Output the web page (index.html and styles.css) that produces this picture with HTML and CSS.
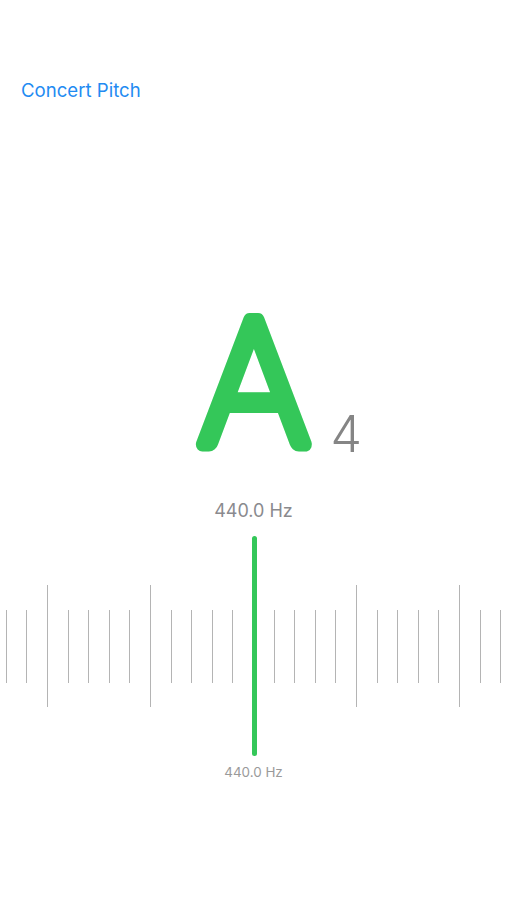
FILE: index.html
```html
<!DOCTYPE html>
<html lang="en">
<head>
    <meta charset="UTF-8">
    <meta name="viewport" content="width=device-width, initial-scale=1.0">
    <title>Tuner</title>
    <link rel="stylesheet" href="styles.css">
</head>
<body>
    <header class="top-bar">
        <a class="pitch-link" href="#">Concert Pitch</a>
    </header>
    <main class="tuner">
        <div class="note">
            <svg class="note-name" width="130" height="150" viewBox="0 0 130 150">
                <text transform="translate(65 0) scale(0.93 1)" x="0" y="143" text-anchor="middle">A</text>
            </svg>
            <span class="note-octave">4</span>
        </div>
        <p class="frequency">440.0 Hz</p>

        <div class="meter">
            <div class="scale" id="scale"></div>
            <div class="needle"></div>
        </div>
        <p class="frequency small">440.0 Hz</p>
    </main>

    <script>
        // 25 ticks, every fifth one is long
        const scale = document.getElementById('scale');
        for (let i = -12; i <= 12; i++) {
            const tick = document.createElement('span');
            tick.className = i % 5 === 0 ? 'tick major' : 'tick';
            scale.appendChild(tick);
        }
    </script>
</body>
</html>
```

FILE: styles.css
```css
body {
    margin: 0;
    padding: 0;
    background-color: #fff;
    font-family: Inter, "Noto Sans", sans-serif;
    color: #8a8a8e;
}

.top-bar {
    padding: 79px 21px 0;
}

.pitch-link {
    display: block;
    font-size: 18.6px;
    line-height: 22px;
    color: #1f8bf2;
    text-decoration: none;
}

.tuner {
    display: flex;
    flex-direction: column;
    align-items: center;
}

.note {
    display: grid;
    grid-template-columns: 1fr auto 1fr;
    align-items: baseline;
    width: 100%;
    height: 150px;
    margin-top: 201px;
}

.note-name {
    grid-column: 2;
    display: block;
    overflow: visible;
}

/* light glyph + round stroke gives the soft rounded letter */
.note-name text {
    font-family: Lato, sans-serif;
    font-size: 176px;
    font-weight: 300;
    fill: #34c759;
    stroke: #34c759;
    stroke-width: 14px;
    stroke-linejoin: round;
}

.note-octave {
    grid-column: 3;
    font-size: 50px;
    line-height: 1;
    font-weight: 300;
    padding-left: 12px;
    color: #858585;
}

.frequency {
    margin: 49px 0 0;
    font-size: 18px;
    line-height: 20px;
}

.frequency.small {
    margin-top: 8px;
    font-size: 13.4px;
    line-height: 16px;
    color: #9a9a9a;
}

.meter {
    position: relative;
    width: 100%;
    height: 220px;
    margin-top: 15px;
}

.scale {
    display: flex;
    justify-content: center;
    align-items: center;
    gap: 19.6px;
    height: 100%;
}

.tick {
    width: 1px;
    height: 73px;
    background-color: #b4b4b4;
}

.tick.major {
    height: 122px;
}

.needle {
    position: absolute;
    top: 0;
    left: 50%;
    width: 5px;
    height: 100%;
    margin-left: -2px;
    border-radius: 3px;
    background-color: #34c759;
}
```
